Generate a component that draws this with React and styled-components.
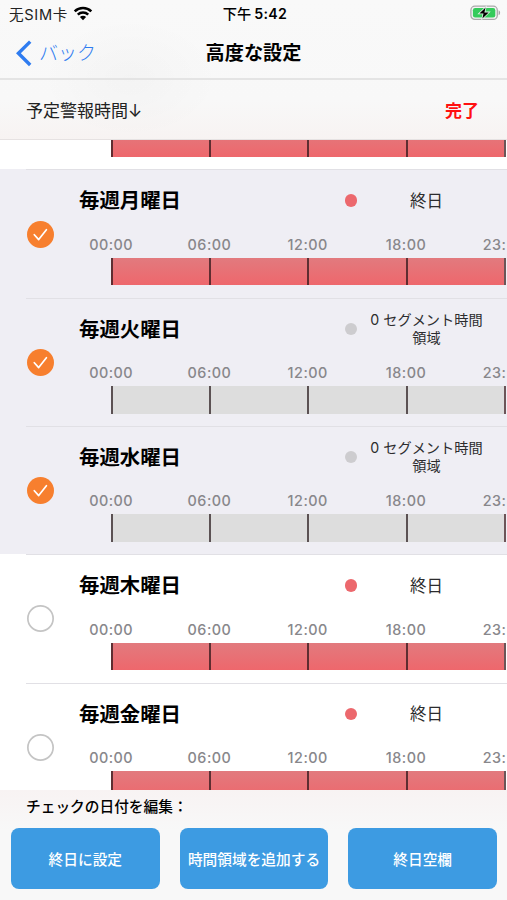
import { useState } from "react";
import styled, { createGlobalStyle } from "styled-components";

const HOURS = ["00:00", "06:00", "12:00", "18:00", "23:"];

const DAYS = [
  { name: "毎週月曜日", allDay: true, checked: true },
  { name: "毎週火曜日", allDay: false, checked: true },
  { name: "毎週水曜日", allDay: false, checked: true },
  { name: "毎週木曜日", allDay: true, checked: false },
  { name: "毎週金曜日", allDay: true, checked: false },
];

function WifiIcon() {
  return (
    <svg width="20" height="15" viewBox="0 0 20 15">
      <g fill="none" stroke="#000" strokeWidth="2.5">
        <path d="M1.7 5.4a11.8 11.8 0 0 1 16.6 0" />
        <path d="M4.8 8.7a7.4 7.4 0 0 1 10.4 0" />
      </g>
      <path d="M10 14.2 6.9 11a4.4 4.4 0 0 1 6.2 0z" fill="#000" />
    </svg>
  );
}

function BatteryIcon() {
  return (
    <svg width="31" height="16" viewBox="0 0 31 16">
      <rect x="0.9" y="1.2" width="26.4" height="13.2" rx="4" fill="#f4f4f4" stroke="#a9a9a9" strokeWidth="1.3" />
      <rect x="2.9" y="3.1" width="22.4" height="9.4" rx="2.2" fill="#35cb5b" />
      <path d="M28.6 5.3c2 .8 2 4.2 0 5z" fill="#a5a5a5" />
      <path
        d="M15.6 2.6 9.4 8.4h4.1l-1.1 5 6.3-6h-4.3z"
        fill="#000"
        stroke="#e4f6e8"
        strokeWidth="1.6"
        paintOrder="stroke"
      />
    </svg>
  );
}

function Timeline({ active }) {
  return (
    <Bar $active={active}>
      {HOURS.slice(1).map((hour) => (
        <Segment key={hour} />
      ))}
    </Bar>
  );
}

function DayRow({ day, onToggle }) {
  return (
    <Row $checked={day.checked}>
      <RowBody>
        <CheckCell>
          <Check $checked={day.checked} onClick={onToggle}>
            {day.checked && (
              <svg width="27" height="27" viewBox="0 0 27 27">
                <path
                  d="M7.3 13.7 11.7 18.6 19.4 8.7"
                  fill="none"
                  stroke="#fff"
                  strokeWidth="1.7"
                  strokeLinecap="round"
                  strokeLinejoin="round"
                />
              </svg>
            )}
          </Check>
        </CheckCell>
        <Content>
          <Summary>
            <DayName>{day.name}</DayName>
            <Dot $active={day.allDay} />
            <Status $small={!day.allDay}>
              {day.allDay ? "終日" : "0 セグメント時間領域"}
            </Status>
          </Summary>
          <Hours>
            {HOURS.map((hour) => (
              <Hour key={hour}>{hour}</Hour>
            ))}
          </Hours>
          <Timeline active={day.allDay} />
        </Content>
      </RowBody>
    </Row>
  );
}

function App() {
  const [days, setDays] = useState(DAYS);

  const toggle = (index) => {
    setDays(
      days.map((day, i) =>
        i === index ? { ...day, checked: !day.checked } : day
      )
    );
  };

  return (
    <Screen>
      <GlobalStyle />
      <Header>
        <StatusBar>
          <Carrier>
            <span>无SIM卡</span>
            <WifiIcon />
          </Carrier>
          <Clock>
            <span>下午</span>
            <span>5:42</span>
          </Clock>
          <Battery>
            <BatteryIcon />
          </Battery>
        </StatusBar>
        <NavBar>
          <Back>
            <svg width="16" height="27" viewBox="0 0 16 27">
              <path d="M14.2 1.6 2.4 13.3 14.2 25" fill="none" stroke="#2f7cf0" strokeWidth="3.4" />
            </svg>
            バック
          </Back>
          <Title>高度な設定</Title>
        </NavBar>
        <SubHeader>
          <span>予定警報時間↓</span>
          <Done>完了</Done>
        </SubHeader>
      </Header>
      <List>
        <ScrolledRow>
          <Timeline active />
        </ScrolledRow>
        {days.map((day, i) => (
          <DayRow key={day.name} day={day} onToggle={() => toggle(i)} />
        ))}
      </List>
      <Footer>
        <FooterLabel>チェックの日付を編集：</FooterLabel>
        <Buttons>
          <Button>終日に設定</Button>
          <Button>時間領域を追加する</Button>
          <Button>終日空欄</Button>
        </Buttons>
      </Footer>
    </Screen>
  );
}

const GlobalStyle = createGlobalStyle`
  * {
    box-sizing: border-box;
  }

  body {
    margin: 0;
    font-family: Inter, "Noto Sans CJK JP", sans-serif;
    color: #000;
  }

  svg {
    display: block;
    flex-shrink: 0;
  }
`;

const Screen = styled.div`
  display: flex;
  flex-direction: column;
  width: 507px;
  height: 900px;
  overflow: hidden;
  background: #fff;
`;

const Header = styled.header`
  flex: 0 0 140px;
  background: radial-gradient(
      ellipse 90px 60px at 130px 78px,
      rgba(0, 0, 0, 0.02),
      transparent
    ),
    linear-gradient(#f9f9f9 0, #f8f8f8 100px, #f7f3f2 140px);
`;

const StatusBar = styled.div`
  display: grid;
  grid-template-columns: 1fr auto 1fr;
  align-items: center;
  height: 26px;
  padding: 0 6px 0 9px;
  font-size: 14.6px;
`;

const Carrier = styled.div`
  display: flex;
  align-items: center;
  gap: 5px;
  letter-spacing: 0.7px;
  color: #222;
`;

const Clock = styled.div`
  display: flex;
  align-items: baseline;
  gap: 3px;
  font-weight: 500;
  font-size: 14.2px;

  span:last-child {
    font-weight: 600;
    letter-spacing: 0.3px;
  }
`;

const Battery = styled.div`
  display: flex;
  justify-content: flex-end;
`;

const NavBar = styled.nav`
  display: grid;
  grid-template-columns: 1fr auto 1fr;
  align-items: center;
  height: 54px;
  padding: 2px 16px 0;
  border-bottom: 2px solid #e4e4e4;
`;

const Back = styled.div`
  display: flex;
  align-items: center;
  gap: 7px;
  font-size: 19px;
  line-height: 27px;
  font-weight: 300;
  color: #2f7cf0;
`;

const Title = styled.h1`
  margin: 0;
  font-size: 19.2px;
  line-height: 27px;
  font-weight: 700;
`;

const SubHeader = styled.div`
  display: flex;
  align-items: center;
  justify-content: space-between;
  height: 60px;
  padding: 0 28px 0 26px;
  font-size: 17px;
  color: #222;
  border-bottom: 1px solid #e6e2e2;
`;

const Done = styled.span`
  font-weight: 700;
  color: #ff1010;
`;

const List = styled.main`
  flex: 1;
  min-height: 0;
  overflow: hidden;
`;

/* what is left of the day above once the list has scrolled */
const ScrolledRow = styled.div`
  display: flex;
  align-items: flex-end;
  height: 29.4px;
  padding: 0 0 12.1px 79px;
`;

const Row = styled.section`
  height: 128.3px;
  padding-left: 26px;
  background: ${(props) => (props.$checked ? "#efeef4" : "#fff")};
`;

const RowBody = styled.div`
  display: flex;
  height: 100%;
  border-top: 1.5px solid #e1e0e5;
`;

const CheckCell = styled.div`
  display: flex;
  align-items: center;
  flex: 0 0 53px;
`;

const Check = styled.div`
  width: 27px;
  height: 27px;
  margin-left: 0.5px;
  border-radius: 50%;
  background: ${(props) => (props.$checked ? "#f77f2e" : "#fff")};
  box-shadow: ${(props) =>
    props.$checked ? "none" : "inset 0 0 0 1.7px #c4c4c4"};
`;

const Content = styled.div`
  flex: 1;
  min-width: 0;
`;

const Summary = styled.div`
  display: flex;
  align-items: center;
  height: 60.5px;
`;

const DayName = styled.h2`
  flex: 0 0 265.5px;
  margin: 0;
  padding-top: 1.5px;
  font-size: 20.4px;
  font-weight: 700;
  line-height: 30px;
`;

const Dot = styled.span`
  width: 12.5px;
  height: 12.5px;
  border-radius: 50%;
  background: ${(props) => (props.$active ? "#ec686d" : "#cdcccf")};
`;

const Status = styled.div`
  width: 122px;
  margin-left: 8.5px;
  text-align: center;
  color: #2c2c2e;
  font-size: ${(props) => (props.$small ? "14.2px" : "16.5px")};
  line-height: 18px;
`;

const Hours = styled.div`
  display: flex;
  height: 27px;
  margin-left: -17px;
`;

const Hour = styled.span`
  flex: 0 0 98.3px;
  text-align: center;
  font-size: 14.4px;
  font-weight: 500;
  line-height: 27.5px;
  letter-spacing: 0.5px;
  color: #88878b;

  /* runs off the right side of the screen */
  &:last-child {
    flex-basis: 52px;
    padding-left: 27.5px;
    text-align: left;
  }
`;

const Bar = styled.div`
  display: flex;
  flex-shrink: 0;
  width: 395.5px;
  height: 27.5px;
  margin-left: 31.5px;
  border-right: 2px solid #6b5558;
  background: ${(props) =>
    props.$active ? "linear-gradient(#e27a7e, #ee676c)" : "#dddddd"};
`;

const Segment = styled.span`
  flex: 1;
  border-left: 2px solid rgba(30, 15, 18, 0.68);
`;

const Footer = styled.footer`
  flex: 0 0 110px;
  padding: 4px 10px 0 11px;
  background: linear-gradient(#f8f3f3, #f8f8f8 40px);
`;

const FooterLabel = styled.div`
  height: 34px;
  padding-left: 15px;
  font-size: 14.7px;
  font-weight: 500;
  line-height: 26px;
`;

const Buttons = styled.div`
  display: grid;
  grid-template-columns: repeat(3, 1fr);
  gap: 20px;
`;

const Button = styled.button`
  height: 61px;
  padding: 0 0 1px;
  border: none;
  border-radius: 8px;
  background: #3d9be2;
  color: #fff;
  font-family: inherit;
  font-size: 14.7px;
  font-weight: 500;
  white-space: nowrap;
`;

export default App;
